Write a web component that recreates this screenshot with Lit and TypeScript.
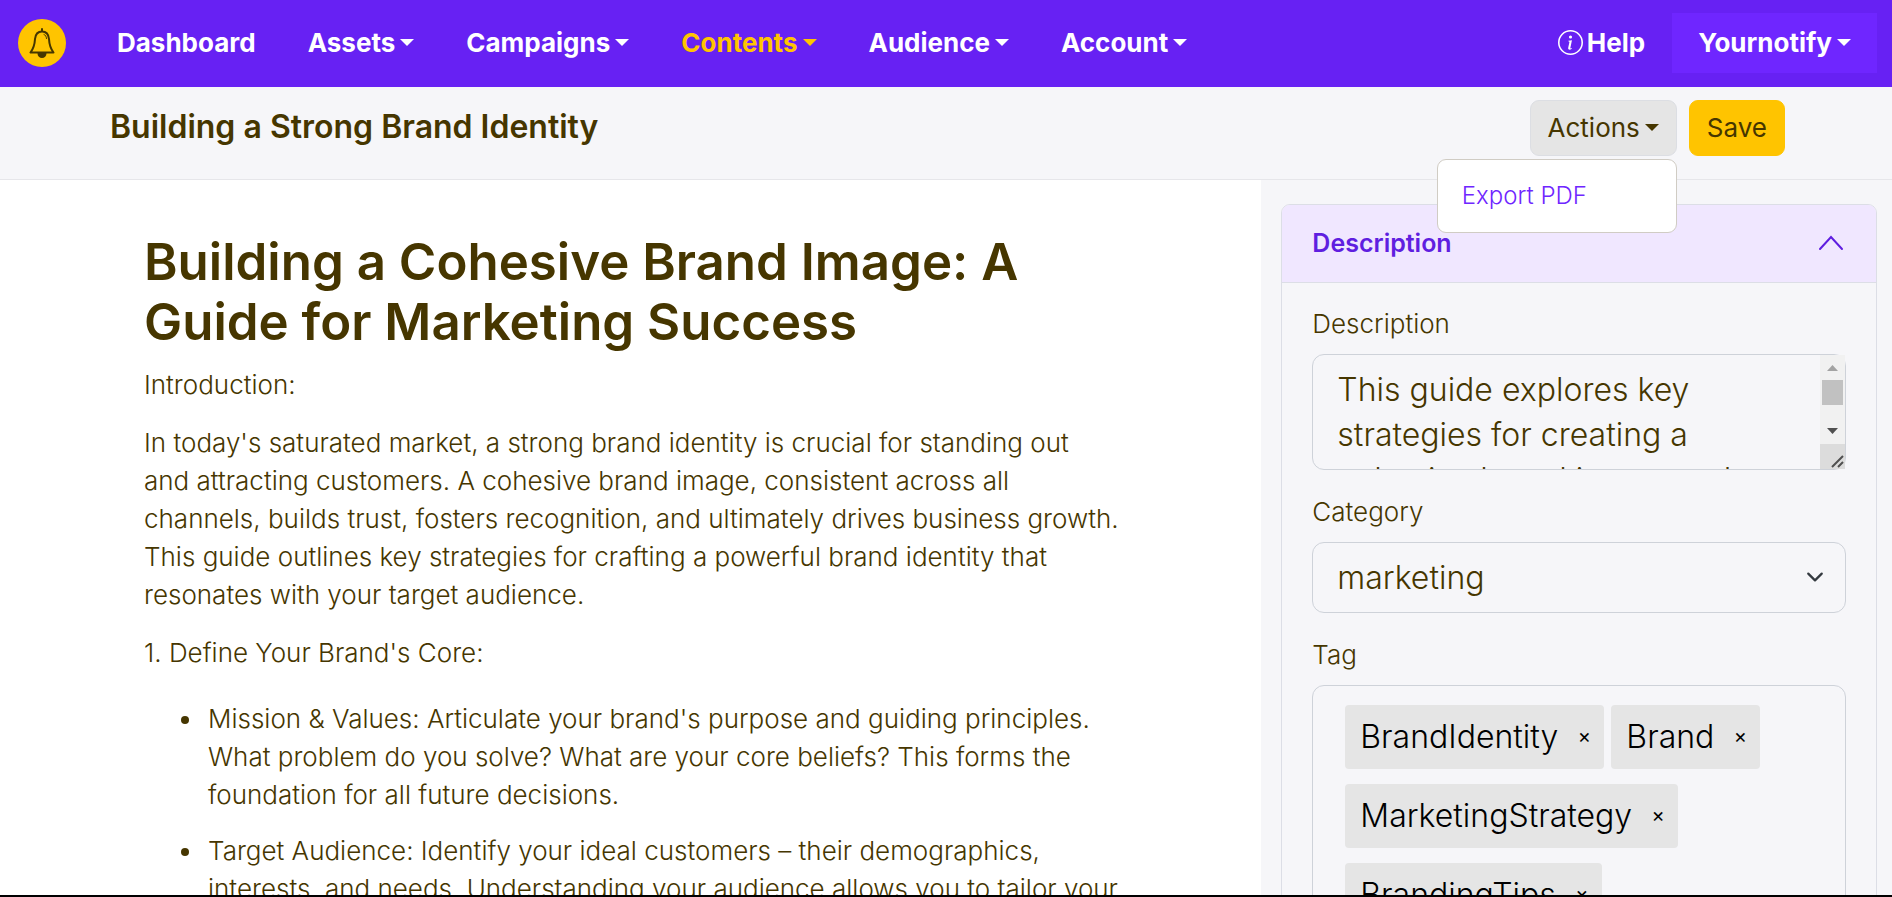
import { LitElement, html, css } from "lit";
import { customElement, property } from "lit/decorators.js";
import { classMap } from "lit/directives/class-map.js";

const base = css`
  :host { display: block; box-sizing: border-box; }
  *, *::before, *::after { box-sizing: border-box; }
  button, select, textarea { font-family: inherit; color: inherit; margin: 0; }
  .caret {
    display: inline-block;
    border: 7px solid transparent;
    border-top-color: currentColor;
    border-bottom: 0;
    margin-left: 5px;
    vertical-align: 6px;
  }
`;

@customElement("top-nav")
export class TopNav extends LitElement {
  static styles = [base, css`
    .bar { display: flex; align-items: center; height: 87px; padding: 0 15px 2px 18px; background: #6721f3; color: #fff; }
    .bell { display: flex; align-items: center; justify-content: center; width: 48px; height: 48px; border: 0; border-radius: 50%; padding: 0; background: #ffc400; color: #463600; }
    .menu { display: flex; gap: 52px; margin-left: 51px; }
    .link { color: inherit; text-decoration: none; font-size: 26px; line-height: 36px; font-weight: 700; white-space: nowrap; }
    .active { color: #ffc400; }
    .side { display: flex; align-items: center; margin-left: auto; gap: 27px; }
    .help { display: flex; align-items: center; gap: 4px; }
    .account { padding: 12px 26px; background: #6f26ff; }
  `];

  private items = [
    { label: "Dashboard", menu: false },
    { label: "Assets", menu: true },
    { label: "Campaigns", menu: true },
    { label: "Contents", menu: true, active: true },
    { label: "Audience", menu: true },
    { label: "Account", menu: true },
  ];

  render() {
    return html`
      <nav class="bar" aria-label="Main">
        <button class="bell" aria-label="Notifications">
          <svg width="28" height="30" viewBox="0 0 28 30" fill="none" stroke="currentColor" stroke-width="2" stroke-linejoin="round" stroke-linecap="round">
            <path d="M14 3.500C9.500 3.500 7.500 6 7 11c-.300 6-1.500 9.500-4.500 13.500h23C22.500 20.500 21.300 17 21 11c-.500-5-2.500-7.500-7-7.500Z" />
            <path d="M14 1v2" />
            <path d="M16 6.500c1.500.500 2.300 1.800 2.500 4" stroke-width="1" />
            <path d="M10.500 25.500a3.500 3.500 0 0 0 7 0Z" fill="currentColor" />
          </svg>
        </button>
        <div class="menu">
          ${this.items.map((i) => html`<a href="#" class=${classMap({ link: true, active: !!i.active })}>${i.label}${i.menu ? html`<span class="caret"></span>` : ""}</a>`)}
        </div>
        <div class="side">
          <a href="#" class="link help">
            <svg width="25" height="25" viewBox="0 0 16 16" fill="currentColor">
              <path d="M8 15A7 7 0 1 1 8 1a7 7 0 0 1 0 14m0 1A8 8 0 1 0 8 0a8 8 0 0 0 0 16" />
              <path d="m8.930 6.588-2.290.287-.082.380.450.083c.294.070.352.176.288.469l-.738 3.468c-.194.897.105 1.319.808 1.319.545 0 1.178-.252 1.465-.598l.088-.416c-.200.176-.492.246-.686.246-.275 0-.375-.193-.304-.533zM9 4.500a1 1 0 1 1-2 0 1 1 0 0 1 2 0" />
            </svg>
            Help</a>
          <a href="#" class="link account">Yournotify<span class="caret"></span></a>
        </div>
      </nav>`;
  }
}

@customElement("title-bar")
export class TitleBar extends LitElement {
  static styles = [base, css`
    .bar { display: flex; align-items: flex-start; justify-content: space-between; height: 93px; padding: 13px 107px 0 110px; background: #f6f6f9; border-bottom: 1px solid #e6e6ea; }
    .title { margin: 0; font-size: 32px; line-height: 54px; font-weight: 600; }
    .tools { display: flex; gap: 12px; }
    .btn { height: 56px; padding: 0 17px; border: 1px solid #dcdee3; border-radius: 9px; background: #e5e5e5; font-size: 26px; line-height: 36px; white-space: nowrap; }
    .primary { background: #ffc400; border-color: #ffc400; }
    .dropdown { position: relative; }
    .menu { position: absolute; z-index: 5; top: 59px; right: 0; width: 240px; margin: 0; padding: 12px 0; list-style: none; background: #fff; border: 1px solid #d0ccc4; border-radius: 9px; }
    .item { display: block; padding: 6px 24px; font-size: 24px; line-height: 36px; font-weight: 300; color: #6f26ff; text-decoration: none; }
  `];

  render() {
    return html`
      <header class="bar">
        <h2 class="title">Building a Strong Brand Identity</h2>
        <div class="tools">
          <div class="dropdown">
            <button class="btn" aria-haspopup="true" aria-expanded="true">Actions<span class="caret"></span></button>
            <ul class="menu"><li><a class="item" href="#">Export PDF</a></li></ul>
          </div>
          <button class="btn primary">Save</button>
        </div>
      </header>`;
  }
}

@customElement("article-view")
export class ArticleView extends LitElement {
  static styles = [base, css`
    .page { padding: 52px 130px 0 144px; font-size: 26px; line-height: 38px; font-weight: 300; }
    .heading { margin: 0 0 14px; font-size: 51px; line-height: 60px; font-weight: 600; }
    .text { margin: 0 0 20px; }
    .points { margin: 0; padding: 8px 0 0 60px; }
    .point { margin-bottom: 18px; padding-left: 4px; }
  `];

  render() {
    return html`
      <article class="page">
        <h1 class="heading">Building a Cohesive Brand Image: A Guide for Marketing Success</h1>
        <p class="text">Introduction:</p>
        <p class="text">In today's saturated market, a strong brand identity is crucial for standing out and&nbsp;attracting customers. A cohesive brand image, consistent across all channels, builds trust, fosters recognition, and ultimately drives business growth. This guide outlines key strategies for crafting a powerful brand identity that resonates with your target audience.</p>
        <p class="text">1. Define Your Brand's Core:</p>
        <ul class="points">
          <li class="point">Mission &amp; Values: Articulate your brand's purpose and guiding principles. What problem do you solve? What are your core beliefs? This forms the foundation for all future decisions.</li>
          <li class="point">Target Audience: Identify your ideal customers – their demographics, interests, and needs. Understanding your audience allows you to tailor your</li>
        </ul>
      </article>`;
  }
}

@customElement("tag-chip")
export class TagChip extends LitElement {
  @property() label = "";
  static styles = [base, css`
    .chip { display: flex; align-items: center; height: 64px; padding: 0 10px 2px 15px; border-radius: 4px; background: #e5e5e5; color: #000; font-size: 32px; font-weight: 300; }
    .remove { margin-left: 16px; padding: 0; width: 20px; border: 0; background: none; font-size: 20px; line-height: 30px; color: #000; }
  `];
  render() {
    return html`<span class="chip">${this.label}<button class="remove" aria-label="Remove ${this.label}">×</button></span>`;
  }
}

@customElement("details-panel")
export class DetailsPanel extends LitElement {
  static styles = [base, css`
    .card { border: 1px solid #dcdee6; border-radius: 9px; min-height: 900px; overflow: hidden; }
    .head { display: flex; align-items: center; justify-content: space-between; width: 100%; height: 78px; padding: 0 32px 2px 30px; border: 0; border-bottom: 1px solid #dcdee6; background: #f0e7ff; color: #5f1ee0; font-size: 25px; font-weight: 600; text-align: left; }
    .body { padding: 23px 30px; }
    .label { display: block; margin-bottom: 12px; font-size: 26px; line-height: 36px; font-weight: 300; }
    .field { position: relative; margin-bottom: 24px; }
    .input { display: block; width: 100%; padding: 12px 24px; border: 1px solid #ced2d9; border-radius: 12px; background: transparent; font-size: 32px; line-height: 45px; font-weight: 300; }
    .area { height: 116px; resize: none; overflow: hidden; padding-right: 60px; }
    .select { height: 71px; appearance: none; }
    .arrow { position: absolute; right: 22px; top: 26px; pointer-events: none; }
    .scroll { position: absolute; right: 1px; top: 1px; pointer-events: none; }
    .tags { display: flex; flex-wrap: wrap; gap: 15px 7px; padding: 19px 32px; }
  `];

  private tags = ["BrandIdentity", "Brand", "MarketingStrategy", "BrandingTips"];

  render() {
    return html`
      <section class="card">
        <button class="head" aria-expanded="true">Description
          <svg width="26" height="16" viewBox="0 0 26 16" fill="none" stroke="currentColor" stroke-width="2" stroke-linecap="round"><path d="M2 14 13 2l11 12" /></svg>
        </button>
        <div class="body">
          <label class="label" for="description">Description</label>
          <div class="field">
            <textarea id="description" class="input area" .value=${"This guide explores key strategies for creating a cohesive brand image and achieving marketing success."}></textarea>
            <svg class="scroll" width="25" height="114" aria-hidden="true">
              <rect width="25" height="114" fill="#f1f1f1" />
              <path d="M7 16h11l-5.500-6Z" fill="#a3a3a3" />
              <rect x="2" y="25" width="21" height="25" fill="#c1c1c1" />
              <path d="M7 73h11l-5.500 6Z" fill="#505050" />
              <rect y="89" width="25" height="25" fill="#dcdcdc" />
              <path d="M12 112 23 101M18 112l5-5" stroke="#505050" stroke-width="2" />
            </svg>
          </div>
          <label class="label" for="category">Category</label>
          <div class="field">
            <select id="category" class="input select"><option>marketing</option></select>
            <svg class="arrow" width="18" height="18" viewBox="0 0 16 16" fill="none" stroke="#343a40" stroke-width="2" stroke-linecap="round" stroke-linejoin="round" aria-hidden="true"><path d="m2 5 6 6 6-6" /></svg>
          </div>
          <span class="label" id="tag-label">Tag</span>
          <div class="input tags" role="group" aria-labelledby="tag-label">${this.tags.map((t) => html`<tag-chip label=${t}></tag-chip>`)}</div>
        </div>
      </section>`;
  }
}

@customElement("app-root")
export class AppRoot extends LitElement {
  static styles = [base, css`
    :host { display: flex; flex-direction: column; height: 100vh; overflow: hidden; border-bottom: 2px solid #000; background: #fff; color: #463600; font-family: "Inter", sans-serif; }
    .main { display: grid; grid-template-columns: 2fr 1fr; flex: 1; min-height: 0; }
    .content { min-width: 0; overflow: hidden; }
    .aside { min-width: 0; overflow: hidden; padding: 24px 15px 0 20px; background: #f6f6f9; }
  `];

  render() {
    return html`
      <top-nav></top-nav>
      <title-bar></title-bar>
      <div class="main">
        <main class="content"><article-view></article-view></main>
        <aside class="aside"><details-panel></details-panel></aside>
      </div>`;
  }
}
